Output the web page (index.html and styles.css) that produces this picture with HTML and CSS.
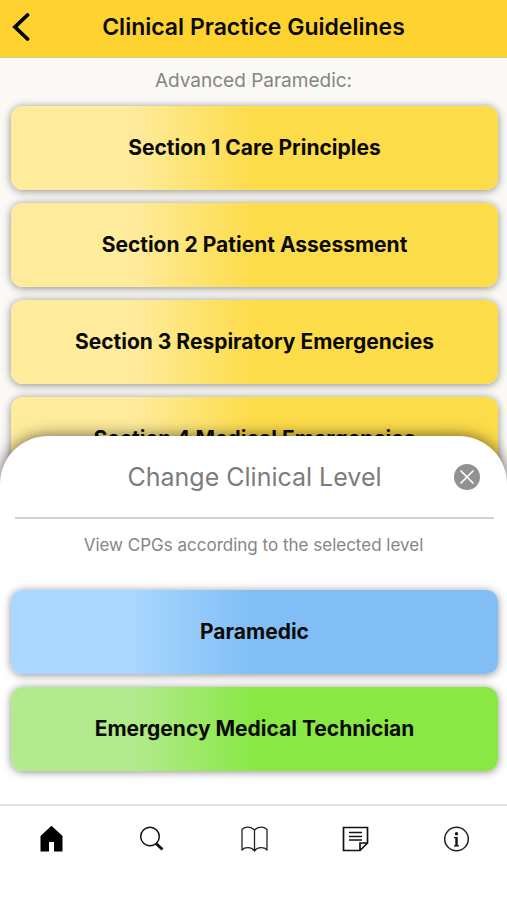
FILE: index.html
```html
<!DOCTYPE html>
<html lang="en">
<head>
<meta charset="utf-8">
<meta name="viewport" content="width=device-width, initial-scale=1">
<title>Clinical Practice Guidelines</title>
<link rel="stylesheet" href="styles.css">
</head>
<body>
<header class="topbar">
  <button class="back" type="button" aria-label="Back">
    <svg width="20" height="30" viewBox="0 0 20 30"><path d="M17.500 3 5 15l12.500 12" fill="none" stroke="#000" stroke-width="3.800" stroke-linecap="round" stroke-linejoin="miter"/></svg>
  </button>
  <h1 class="topbar-title">Clinical Practice Guidelines</h1>
</header>
<div class="content">
  <main class="list">
    <p class="level">Advanced Paramedic:</p>
    <div class="cards">
      <button class="card yellow" type="button">Section 1 Care Principles</button>
      <button class="card yellow" type="button">Section 2 Patient Assessment</button>
      <button class="card yellow" type="button">Section 3 Respiratory Emergencies</button>
      <button class="card yellow" type="button">Section 4 Medical Emergencies</button>
    </div>
  </main>
  <section class="sheet" role="dialog" aria-labelledby="sheet-title">
    <div class="sheet-head">
      <h2 class="sheet-title" id="sheet-title">Change Clinical Level</h2>
      <button class="close" type="button" aria-label="Close">
        <svg width="26" height="26" viewBox="0 0 26 26"><circle cx="13" cy="13" r="13" fill="#929292"/><path d="m7 7 12 12M19 7 7 19" stroke="#fff" stroke-width="1.700" stroke-linecap="round"/></svg>
      </button>
    </div>
    <p class="hint">View CPGs according to the selected level</p>
    <div class="cards">
      <button class="card blue" type="button">Paramedic</button>
      <button class="card green" type="button">Emergency Medical Technician</button>
    </div>
  </section>
</div>
<nav class="tabs" aria-label="Main">
  <a class="tab" href="#home" aria-label="Home">
    <svg width="28" height="28" viewBox="0 0 28 28"><path d="M14.500 .8 25.500 11v15.500H17v-9.500h-5v9.500H3.500V11z"/></svg>
  </a>
  <a class="tab" href="#search" aria-label="Search">
    <svg width="28" height="28" viewBox="0 0 28 28" fill="none" stroke="#111"><circle cx="12" cy="11.500" r="9.300" stroke-width="1.500"/><path d="m18 18.500 6.500 6" stroke-width="3"/></svg>
  </a>
  <a class="tab" href="#guidelines" aria-label="Guidelines">
    <svg width="28" height="28" viewBox="0 0 28 28" fill="none" stroke="#222" stroke-width="1.300" stroke-linejoin="round"><path d="M14.500 5C11 1.200 5 1.500 2 4.500v20.500c3-3.200 9.500-3.200 12.500 1 3-4.200 9.500-4.200 12.500-1V4.500C24 1.500 18 1.200 14.500 5zM14.500 5v21"/></svg>
  </a>
  <a class="tab" href="#notes" aria-label="Notes">
    <svg width="28" height="28" viewBox="0 0 28 28" fill="none" stroke="#111" stroke-width="1.700"><path d="M2.500 2.500h24v15.500l-7.500 7.500H2.500zM19 25.500V18h7.500M8 7.500h13M8 11.500h13M8 15h13"/></svg>
  </a>
  <a class="tab" href="#info" aria-label="Information">
    <svg width="28" height="28" viewBox="0 0 28 28"><circle cx="14.500" cy="14" r="11.800" fill="none" stroke="#222" stroke-width="1.500"/><circle cx="14.500" cy="8.700" r="1.700" fill="#111"/><path d="M12 12h3.700v8.300h1.300v1.200h-5v-1.200h1.300v-7.100h-1.300z" fill="#111"/></svg>
  </a>
</nav>
</body>
</html>
```
FILE: styles.css
```css
* {
  box-sizing: border-box;
}

body {
  margin: 0;
  height: 100vh;
  display: flex;
  flex-direction: column;
  font-family: Inter, "Liberation Sans", sans-serif;
  color: #0a0a05;
  background: #fff;
}

h1, h2, p {
  margin: 0;
}

button {
  font: inherit;
  color: inherit;
  border: 0;
  padding: 0;
  background: none;
}

svg {
  display: block;
}

.topbar {
  display: grid;
  grid-template-columns: 40px 1fr 40px;
  align-items: center;
  height: 58px;
  padding-bottom: 4px;
  background: #ffd32f;
  border-bottom: 1px solid #d8c98c;
}

.back {
  padding-left: 10px;
}

.topbar-title {
  font-size: 23px;
  line-height: 28px;
  font-weight: 600;
  text-align: center;
  white-space: nowrap;
}

.content {
  flex: 1;
  position: relative;
  overflow: hidden;
  background: #faf9f5;
}

.level {
  padding: 10px 0 12px;
  font-size: 19px;
  line-height: 26px;
  text-align: center;
  color: #858585;
}

.cards {
  display: flex;
  flex-direction: column;
  gap: 13px;
  padding: 0 9px 0 11px;
}

.card {
  height: 84px;
  border-radius: 12px;
  font-size: 21px;
  line-height: 28px;
  font-weight: 700;
  box-shadow: 0 1px 9px rgba(0, 0, 0, 0.45);
}

.yellow {
  background: linear-gradient(90deg, #feeb9c 25%, #fddc49 50%);
}

.blue {
  background: linear-gradient(90deg, #a8d7ff 25%, #80bef5 50%);
}

.green {
  background: linear-gradient(90deg, #b3ea8d 25%, #8ae844 50%);
}

.sheet {
  position: absolute;
  left: 0;
  right: 0;
  bottom: 0;
  padding-bottom: 33px;
  border-radius: 48px 48px 0 0;
  background: #fff;
  box-shadow: 0 0 16px rgba(0, 0, 0, 0.6);
}

.sheet-head {
  display: grid;
  grid-template-columns: 40px 1fr 40px;
  align-items: center;
  height: 83px;
  margin: 0 13px 0 15px;
  border-bottom: 2px solid #d2d2d2;
}

.sheet-title {
  grid-column: 2;
  font-size: 25px;
  line-height: 32px;
  font-weight: 400;
  text-align: center;
  color: #7c7c7c;
}

.hint {
  padding: 14px 0 33px;
  font-size: 17px;
  line-height: 24px;
  text-align: center;
  color: #858585;
}

.tabs {
  display: flex;
  height: 96px;
  padding-top: 19px;
  border-top: 2px solid #e2e2e2;
  background: #fff;
}

.tab {
  flex: 1;
  display: flex;
  justify-content: center;
}
```
